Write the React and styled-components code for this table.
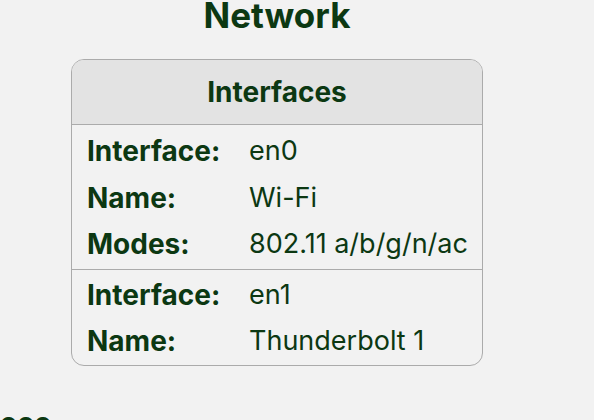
import React from 'react';
import styled, { createGlobalStyle } from 'styled-components';

const GlobalStyle = createGlobalStyle`
	html, body {
		margin: 0;
		padding: 0;
		background: #f2f2f2;
		font-family: Inter, "Noto Sans", sans-serif;
		color: #0c3812;
		overflow: hidden;
	}
`;

const Page = styled.div`
	width: 594px;
	height: 420px;
	overflow: hidden;
`;

const Title = styled.h1`
	margin: 0;
	height: 59px;
	font-size: 35px;
	line-height: 30px;
	font-weight: 700;
	text-align: center;
	width: 554px;
`;

const Card = styled.div`
	margin-left: 71px;
	width: 410px;
	border: 1.5px solid #ababab;
	border-radius: 13px;
	overflow: hidden;
`;

const CardHeader = styled.div`
	background: #e3e3e3;
	height: 64px;
	display: flex;
	align-items: center;
	justify-content: center;
	font-size: 28px;
	font-weight: 700;
	border-bottom: 1.5px solid #ababab;
`;

const Group = styled.div`
	padding: ${p => p.$first ? '3px 0 1px' : '2px 0 0'};
	border-top: ${p => p.$first ? 'none' : '1.5px solid #ababab'};
`;

const Row = styled.div`
	display: grid;
	grid-template-columns: 162px 1fr;
	height: 46.5px;
	align-items: center;
	padding-left: 15px;
	font-size: 28px;
	line-height: 46px;
`;

const Label = styled.span`
	font-weight: 700;
`;

const Value = styled.span`
	font-weight: 400;
	font-size: 27px;
`;

const Footer = styled.div`
	margin-top: 42px;
	font-size: 28px;
	line-height: 30px;
	font-weight: 700;
`;

const groups = [
	[
		['Interface:', 'en0'],
		['Name:', 'Wi-Fi'],
		['Modes:', '802.11 a/b/g/n/ac'],
	],
	[
		['Interface:', 'en1'],
		['Name:', 'Thunderbolt 1'],
	],
];

export default function App() {
	return (
		<Page>
			<GlobalStyle />
			<Title>Network</Title>
			<Card>
				<CardHeader>Interfaces</CardHeader>
				{groups.map((g, i) => (
					<Group key={i} $first={i === 0}>
						{g.map(([l, v]) => (
							<Row key={l}>
								<Label>{l}</Label>
								<Value>{v}</Value>
							</Row>
						))}
					</Group>
				))}
			</Card>
			<Footer>ooo</Footer>
		</Page>
	);
}
